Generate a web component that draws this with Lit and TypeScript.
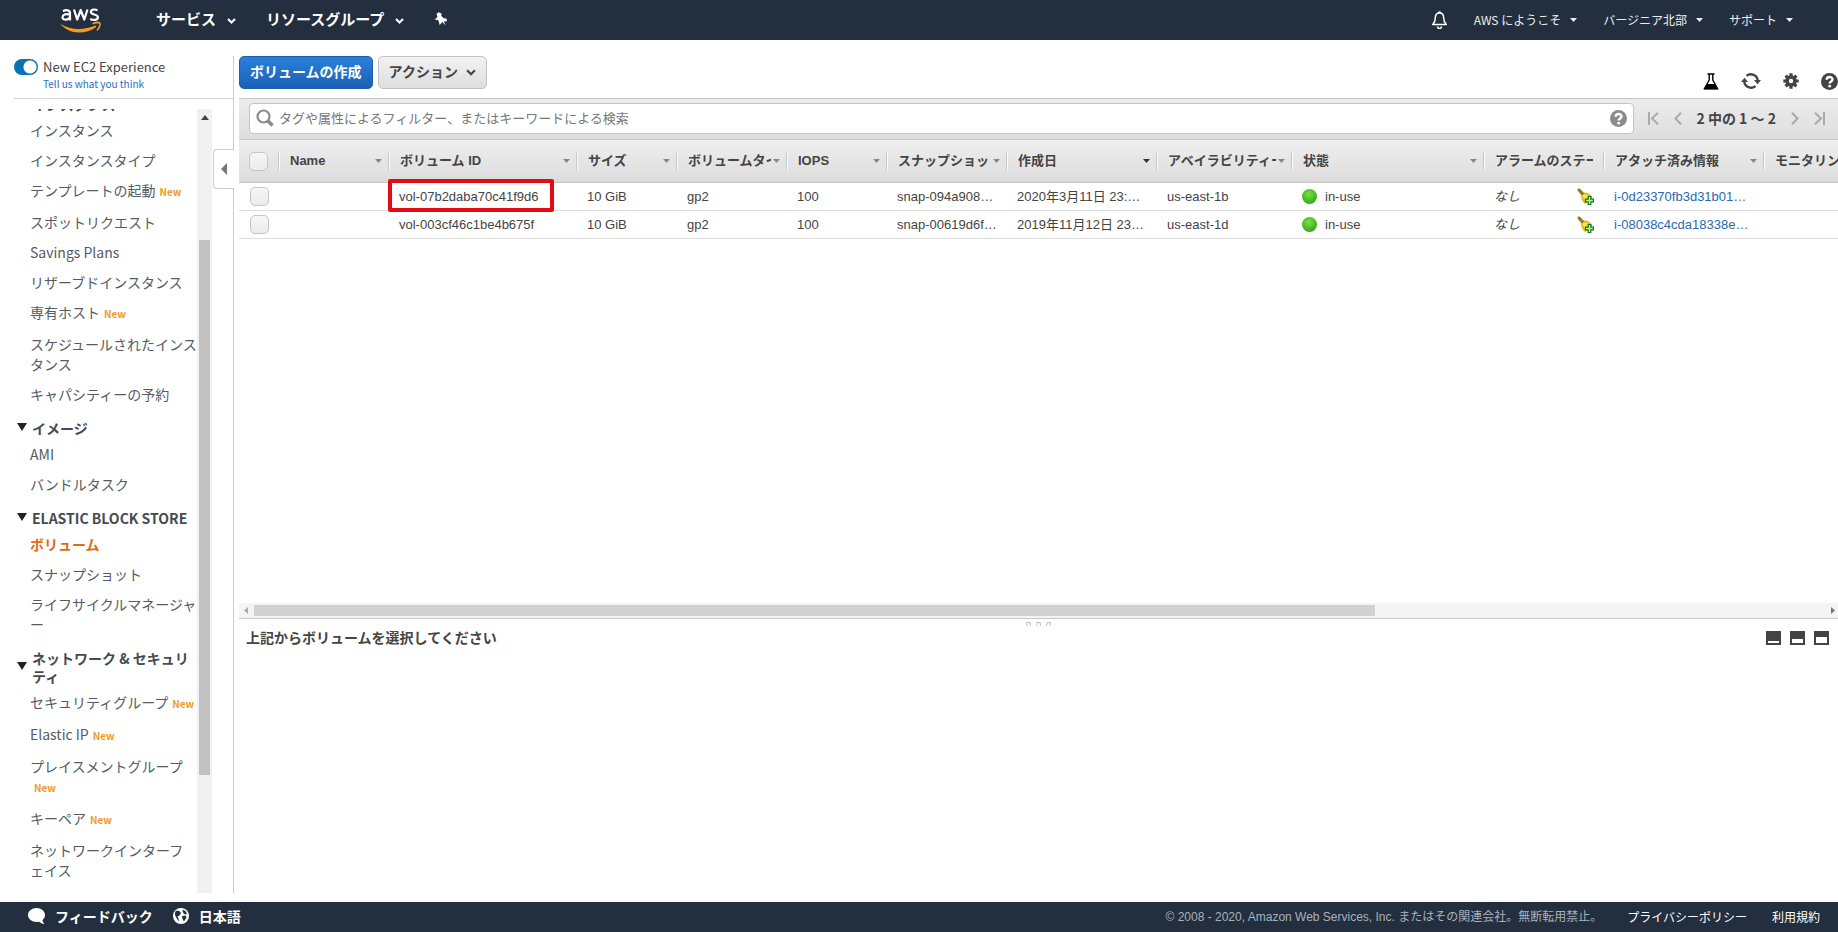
import { LitElement, html, css, svg, nothing } from "lit";
import { customElement } from "lit/decorators.js";
import { classMap } from "lit/directives/class-map.js";

type NavItem = { lines: string[]; heading?: boolean; isNew?: boolean; active?: boolean };

const NAV: NavItem[] = [
  { lines: ["インスタンス"], heading: true },
  { lines: ["インスタンス"] },
  { lines: ["インスタンスタイプ"] },
  { lines: ["テンプレートの起動"], isNew: true },
  { lines: ["スポットリクエスト"] },
  { lines: ["Savings Plans"] },
  { lines: ["リザーブドインスタンス"] },
  { lines: ["専有ホスト"], isNew: true },
  { lines: ["スケジュールされたインス", "タンス"] },
  { lines: ["キャパシティーの予約"] },
  { lines: ["イメージ"], heading: true },
  { lines: ["AMI"] },
  { lines: ["バンドルタスク"] },
  { lines: ["ELASTIC BLOCK STORE"], heading: true },
  { lines: ["ボリューム"], active: true },
  { lines: ["スナップショット"] },
  { lines: ["ライフサイクルマネージャ", "ー"] },
  { lines: ["ネットワーク & セキュリ", "ティ"], heading: true },
  { lines: ["セキュリティグループ"], isNew: true },
  { lines: ["Elastic IP"], isNew: true },
  { lines: ["プレイスメントグループ", ""], isNew: true },
  { lines: ["キーペア"], isNew: true },
  { lines: ["ネットワークインターフ", "ェイス"] },
];

const COLUMNS: { label: string; width: number; caret?: boolean; sorted?: boolean }[] = [
  { label: "Name", width: 110, caret: true },
  { label: "ボリューム ID", width: 188, caret: true },
  { label: "サイズ", width: 100, caret: true },
  { label: "ボリュームタイプ", width: 110, caret: true },
  { label: "IOPS", width: 100, caret: true },
  { label: "スナップショット", width: 120, caret: true },
  { label: "作成日", width: 150, caret: true, sorted: true },
  { label: "アベイラビリティーゾーン", width: 135, caret: true },
  { label: "状態", width: 192, caret: true },
  { label: "アラームのステータス", width: 120 },
  { label: "アタッチ済み情報", width: 160, caret: true },
  { label: "モニタリング", width: 120 },
];

const VOLUMES = [
  { id: "vol-07b2daba70c41f9d6", size: "10 GiB", type: "gp2", iops: "100", snap: "snap-094a908…", date: "2020年3月11日 23:…", zone: "us-east-1b", state: "in-use", instance: "i-0d23370fb3d31b01…", marked: true },
  { id: "vol-003cf46c1be4b675f", size: "10 GiB", type: "gp2", iops: "100", snap: "snap-00619d6f…", date: "2019年11月12日 23…", zone: "us-east-1d", state: "in-use", instance: "i-08038c4cda18338e…", marked: false },
];

const chevron = (w: number, h: number, sw: number) => svg`<svg class="chev" width=${w} height=${h} viewBox="0 0 9 6"><path d="M1 1l3.5 3.5L8 1" fill="none" stroke="currentColor" stroke-width=${sw}/></svg>`;
const triangle = html`<svg width="7" height="4" viewBox="0 0 7 4"><path d="M0 0h7L3.5 4z" fill="currentColor"/></svg>`;
const helpIcon = (size: number) => html`<svg width=${size} height=${size} viewBox="0 0 18 18"><circle cx="9" cy="9" r="9" fill="currentColor"/><path d="M6 7.200c0-4 6.200-3.800 6.200-.4 0 2.200-3 2.100-3 4.200" fill="none" stroke="#fff" stroke-width="2.500"/><circle cx="9.200" cy="13.900" r="1.500" fill="#fff"/></svg>`;

@customElement("app-root")
export class AppRoot extends LitElement {
  static styles = css`
    :host { display: flex; flex-direction: column; height: 100vh; overflow: hidden; background: #fff; color: #444; font: 14px/20px "Noto Sans CJK JP", sans-serif; }
    * { box-sizing: border-box; }
    svg { display: block; flex: none; }
    a { color: inherit; text-decoration: none; }
    button { font: inherit; color: inherit; background: none; border: 0; margin: 0; padding: 0; display: flex; align-items: center; cursor: pointer; white-space: nowrap; }
    .top { flex: none; display: flex; align-items: center; height: 40px; padding: 0 45px 0 59px; background: #232f3e; color: #fff; }
    .top nav { display: flex; align-items: center; margin-left: 53px; padding-bottom: 2px; font-size: 15px; font-weight: 700; gap: 30px; }
    .top nav button { gap: 11px; }
    .chev { margin-top: 3px; }
    .top .account { display: flex; align-items: center; margin-left: auto; font-size: 12px; gap: 26px; color: #eee; }
    .account button { gap: 9px; }
    .body { flex: 1; min-height: 0; display: flex; padding-bottom: 9px; }
    .side { position: relative; flex: none; width: 234px; margin-top: 16px; border-right: 1px solid #ccc; display: flex; flex-direction: column; }
    .switch { display: flex; gap: 5px; margin-left: 14px; height: 43px; border-bottom: 1px solid #d5d5d5; }
    .toggle { appearance: none; margin: 3px 0 0; width: 24px; height: 16px; border-radius: 8px; background: radial-gradient(circle at 16px 8px, #fff 6px, #0972b5 7px); }
    .switch label { display: block; font-size: 13px; line-height: 22px; }
    .switch a { display: block; font-size: 10px; line-height: 12px; color: #2a6ebb; }
    .scroll { flex: 1; min-height: 0; margin-top: 10px; display: flex; overflow: hidden; }
    .list { width: 197px; margin: -24px 0 0; padding: 0; list-style: none; white-space: nowrap; overflow: hidden; color: #545b64; }
    .item { padding: 5px 0 5px 30px; }
    .item.new { padding-bottom: 7px; }
    .item.active { color: #dd6b10; font-weight: 700; }
    .tag { color: #f09a26; font-size: 10px; font-weight: 700; line-height: 16px; margin-left: 4px; }
    .heading { display: flex; align-items: center; gap: 5px; padding: 10px 0 2px 17px; line-height: 18px; font-weight: 700; color: #444b52; }
    .heading svg { margin-bottom: 2px; color: #222; }
    .vbar { width: 15px; background: #f1f1f1; display: flex; flex-direction: column; align-items: center; color: #444; padding-top: 6px; }
    .vthumb { width: 11px; flex: 0 0 535px; margin-top: 120px; background: #c1c1c1; }
    .collapse { position: absolute; right: -1px; top: 93px; width: 21px; height: 40px; background: #fff; border: 1px solid #ccc; border-right: 0; border-radius: 4px 0 0 4px; justify-content: center; color: #777; }
    .main { flex: 1; min-width: 0; margin-left: 5px; display: flex; flex-direction: column; }
    .actions { flex: none; display: flex; gap: 5px; height: 58px; padding-top: 16px; }
    .btn { height: 33px; padding: 0 10px 3px; border: 1px solid #c3c3c3; border-radius: 5px; font-weight: 700; background: linear-gradient(#f2f2f2, #dedede); }
    .btn.menu { gap: 8px; }
    .btn.primary { color: #fff; border-color: #1a5fae; background: linear-gradient(#2a80dc, #1b60b5); }
    .tools { display: flex; align-items: center; gap: 22px; margin: 8px 0 0 auto; height: 34px; color: #444; }
    .filter { flex: none; display: flex; align-items: center; height: 42px; padding: 0 13px 2px 10px; border-top: 1px solid #c4c4c4; border-bottom: 1px solid #c8c8c8; background: linear-gradient(#ececec, #dedede); }
    .search { flex: 1; display: flex; align-items: center; height: 31px; padding: 0 6px; gap: 5px; background: #fff; border: 1px solid #c4c4c4; border-radius: 4px; color: #8b8b8b; }
    .search input { flex: 1; min-width: 0; border: 0; outline: 0; padding: 0; background: none; font: 13px/20px "Noto Sans CJK JP", sans-serif; color: #444; }
    .search input::placeholder { color: #777; opacity: 1; }
    .pager { display: flex; align-items: center; margin-left: 14px; color: #aaa; }
    .pager span { margin: 0 15px; color: #444; font-weight: 700; }
    .pager .gap { margin-left: 15px; }
    .grid { flex: none; height: 463px; overflow: hidden; }
    table { border-collapse: separate; border-spacing: 0; table-layout: fixed; width: 1644px; font: 13px/18px "Liberation Sans", "Noto Sans CJK JP", sans-serif; }
    .pick { width: 39px; }
    th, td { padding: 0; text-align: left; white-space: nowrap; }
    th { height: 43px; background: linear-gradient(#efefef, #dcdcdc); border-bottom: 1px solid #c6c6c6; }
    .cap { display: flex; align-items: center; gap: 2px; height: 18px; padding: 0 6px 0 11px; border-left: 1px solid #c9c9c9; box-shadow: inset 1px 0 #fafafa; color: #888; }
    .cap.plain { padding-right: 10px; }
    .cap span { flex: 1; overflow: hidden; color: #444; }
    .cap.sorted { color: #333; }
    td { height: 28px; padding-left: 11px; border-bottom: 1px solid #ddd; }
    .pick input { appearance: none; display: block; width: 19px; height: 19px; margin: 0; border: 1px solid #c5c5c5; border-radius: 5px; background: linear-gradient(#f6f6f6, #ebebeb); }
    th.pick input { margin-left: 10px; }
    .id { position: relative; }
    .mark { position: absolute; left: 0; top: -4px; width: 166px; height: 33px; border: 4px solid #e60a12; border-radius: 2px; }
    .state, .alarm { display: flex; align-items: center; }
    .state { gap: 8px; }
    .dot { width: 15px; height: 15px; border-radius: 50%; background: radial-gradient(circle at 45% 35%, #7be04a, #3fb51d 60%, #258a10); }
    .alarm { justify-content: space-between; padding-right: 9px; font-style: italic; }
    td a { color: #2a69ad; }
    .hbar { flex: none; display: flex; align-items: center; height: 15px; padding: 0 3px 0 5px; gap: 6px; background: #f4f4f4; color: #777; }
    .hthumb { flex: 0 1 1121px; height: 11px; background: #d1d1d1; }
    .hbar .end { margin-left: auto; }
    .detail { flex: 1; border-top: 1px solid #c8c8c8; }
    .grip { display: flex; justify-content: center; gap: 5px; height: 8px; padding-top: 3px; }
    .grip i { width: 5px; height: 4px; border: 1px solid #bbb; border-bottom: 0; border-radius: 2px; }
    .bar { display: flex; align-items: center; justify-content: space-between; padding: 0 9px 0 7px; }
    h2 { margin: 0; padding-bottom: 2px; font-size: 14px; line-height: 20px; }
    .panes { display: flex; gap: 9px; color: #444; }
    .foot { flex: none; display: flex; align-items: center; height: 30px; padding: 0 18px 0 28px; background: #232f3e; color: #fff; font-weight: 700; }
    .foot button { gap: 10px; margin-right: 20px; padding-bottom: 2px; }
    .legal { margin-left: auto; display: flex; gap: 25px; font-size: 12px; font-weight: 400; }
    .legal span { color: #a9b1ba; font-family: "Liberation Sans", "Noto Sans CJK JP", sans-serif; }
  `;

  private renderNav(item: NavItem) {
    const text = item.lines.map((line, i) => html`${i ? html`<br>` : nothing}${line}`);
    if (item.heading) {
      return html`<li class="heading"><svg width="10" height="8" viewBox="0 0 10 8"><path d="M0 0h10L5 8z" fill="currentColor"/></svg><span>${text}</span></li>`;
    }
    return html`<li class=${classMap({ item: true, new: !!item.isNew, active: !!item.active })}><a href="#">${text}</a>${item.isNew ? html`<span class="tag">New</span>` : nothing}</li>`;
  }

  private renderBell() {
    return html`<svg width="17" height="17" viewBox="0 0 17 17"><path d="M4.500 5C9 3.500 13 5 15.500 9.500L8 16C4.500 13 3.500 9 4.500 5z" fill="#e8b818"/><path d="M5.500 6.500c2.500-.8 5 0 7 2.500L8.500 12.500C6.500 11 5.500 9 5.500 6.500z" fill="#fbe152"/><path d="M.5.500L3 .800 7.500 5.500 4.800 7.500.800 3z" fill="#8f7a2a"/><path d="M11.200 8.500h2.600v2.700h2.700v2.600h-2.700v2.700h-2.600v-2.700H8.500v-2.600h2.700z" fill="#b5f79b" stroke="#0f7a10" stroke-width="1.200"/></svg>`;
  }

  render() {
    return html`
      <header class="top">
        <a href="#" aria-label="AWS"><svg width="44" height="27" viewBox="0 0 44 27">
          <g fill="none" stroke="#fff" stroke-width="2.200" stroke-linejoin="round">
            <path d="M4 4.200c3-1.700 7-1.300 7 2V13.500M11 7.600C6.500 6.500 3.500 7.500 3.500 10.200c0 3.500 6.200 3 7.500-.4"/>
            <path d="M15 2.500l3.200 10L21.700 3l3.600 9.500 3.200-10"/>
            <path d="M38.500 3.200c-3-1.300-6.600-.7-6.600 1.800 0 3.200 7 1.800 7 5.200 0 3-4.400 3.400-7.800 1.700"/>
          </g>
          <path d="M1 16.800c6 3.200 11 5 17 5.200s13-.8 18.500-3.400l.8 1.400C32 24 26 25.600 20 25.600 12.500 25.400 6 22.600 1 16.800z" fill="#f7981f"/>
          <path d="M33.500 16.800c3-1.300 6.500-1.500 7.300-.6.700 1.100-.3 4.800-2.800 7.300" fill="none" stroke="#f7981f" stroke-width="1.600"/>
        </svg></a>
        <nav>
          <button>サービス ${chevron(9, 6, 2)}</button>
          <button>リソースグループ ${chevron(9, 6, 2)}</button>
          <button aria-label="ピン"><svg width="14" height="14" viewBox="0 0 14 14"><path d="M4.500.3l3 1.200-.2 2.500 2.800 2.600 2.200-.3.700 3-3.200.2 2 4-3.400-3.400-2.800 2.800-.7-3L4 8 .500 7.500l3-2.500L2.500 2z" fill="#fff"/></svg></button>
        </nav>
        <div class="account">
          <button aria-label="通知"><svg width="17" height="18" viewBox="0 0 17 18"><path d="M8.500 2C5.500 2 4.300 4.300 4.300 7c0 3.500-1 5-2.600 6.500h13.600C13.700 12 12.700 10.500 12.700 7c0-2.700-1.200-5-4.200-5z" fill="none" stroke="#fff" stroke-width="1.500" stroke-linejoin="round"/><path d="M7.500 2a1 1 0 0 1 2 0M6.500 15.500a2 2 0 0 0 4 0" stroke="#fff" stroke-width="1.500" fill="none"/></svg></button>
          <button>AWS にようこそ ${triangle}</button>
          <button>バージニア北部 ${triangle}</button>
          <button>サポート ${triangle}</button>
        </div>
      </header>
      <div class="body">
        <aside class="side">
          <div class="switch">
            <input class="toggle" id="exp" type="checkbox" role="switch" checked>
            <div><label for="exp">New EC2 Experience</label><a href="#">Tell us what you think</a></div>
          </div>
          <div class="scroll">
            <ul class="list">${NAV.map((n) => this.renderNav(n))}</ul>
            <div class="vbar"><svg width="8" height="5" viewBox="0 0 8 5"><path d="M0 5h8L4 0z" fill="currentColor"/></svg><div class="vthumb"></div></div>
          </div>
          <button class="collapse" aria-label="閉じる"><svg width="6" height="12" viewBox="0 0 6 12"><path d="M6 0v12L0 6z" fill="currentColor"/></svg></button>
        </aside>
        <main class="main">
          <div class="actions">
            <button class="btn primary">ボリュームの作成</button>
            <button class="btn menu">アクション ${chevron(10, 7, 2)}</button>
            <div class="tools">
              <button aria-label="実験"><svg width="16" height="17" viewBox="0 0 16 17"><path d="M4.500 1h7M6.200 1v6L1.500 15.500h13L9.800 7V1" fill="none" stroke="#000" stroke-width="1.400"/><path d="M4 11h8l3 5.500H1z"/></svg></button>
              <button aria-label="更新"><svg width="20" height="18" viewBox="0 0 20 18"><path d="M5.500 3.800A7 7 0 0 1 16.800 8.500M14.500 14.200A7 7 0 0 1 3.200 9.500" fill="none" stroke="currentColor" stroke-width="2.300"/><path d="M13 8h7l-3.500 4.200zM0 10h7L3.500 5.800z" fill="currentColor"/></svg></button>
              <button aria-label="設定"><svg width="16" height="16" viewBox="0 0 16 16"><circle cx="8" cy="8" r="4" fill="none" stroke="currentColor" stroke-width="3.600"/><path d="M8 .300v3.500M8 12.200v3.500M.300 8h3.500M12.200 8h3.500M2.600 2.600L5 5M11 11l2.400 2.400M13.400 2.600L11 5M5 11l-2.400 2.400" stroke="currentColor" stroke-width="3.200"/></svg></button>
              <button aria-label="ヘルプ">${helpIcon(17)}</button>
            </div>
          </div>
          <div class="filter">
            <div class="search">
              <svg width="18" height="18" viewBox="0 0 18 18"><circle cx="7.500" cy="7.500" r="6" fill="none" stroke="currentColor" stroke-width="2.200"/><path d="M12 12l4.500 4.500" stroke="currentColor" stroke-width="3.500"/></svg>
              <input type="text" aria-label="検索" placeholder="タグや属性によるフィルター、またはキーワードによる検索">
              ${helpIcon(17)}
            </div>
            <div class="pager">
              <button aria-label="最初"><svg width="11" height="13" viewBox="0 0 11 13"><path d="M1 0v13M10 .800L4 6.500l6 5.700" fill="none" stroke="currentColor" stroke-width="2"/></svg></button>
              <button class="gap" aria-label="前へ"><svg width="8" height="13" viewBox="0 0 8 13"><path d="M7 .800L1.500 6.500 7 12.200" fill="none" stroke="currentColor" stroke-width="2"/></svg></button>
              <span>2 中の 1 ～ 2</span>
              <button aria-label="次へ"><svg width="8" height="13" viewBox="0 0 8 13"><path d="M1 .800l5.500 5.700L1 12.200" fill="none" stroke="currentColor" stroke-width="2"/></svg></button>
              <button class="gap" aria-label="最後"><svg width="11" height="13" viewBox="0 0 11 13"><path d="M10 0v13M1 .800l6 5.700-6 5.700" fill="none" stroke="currentColor" stroke-width="2"/></svg></button>
            </div>
          </div>
          <div class="grid">
            <table>
              <thead><tr>
                <th class="pick"><input type="checkbox" aria-label="すべて選択"></th>
                ${COLUMNS.map((c) => html`<th style="width:${c.width}px"><div class=${classMap({ cap: true, sorted: !!c.sorted, plain: !c.caret })}><span>${c.label}</span>${c.caret ? triangle : nothing}</div></th>`)}
              </tr></thead>
              <tbody>${VOLUMES.map((v) => html`<tr>
                <td class="pick"><input type="checkbox" aria-label=${v.id}></td>
                <td></td>
                <td class="id">${v.id}${v.marked ? html`<div class="mark"></div>` : nothing}</td>
                <td>${v.size}</td><td>${v.type}</td><td>${v.iops}</td><td>${v.snap}</td><td>${v.date}</td><td>${v.zone}</td>
                <td><div class="state"><i class="dot"></i>${v.state}</div></td>
                <td><div class="alarm">なし${this.renderBell()}</div></td>
                <td><a href="#">${v.instance}</a></td><td></td>
              </tr>`)}</tbody>
            </table>
          </div>
          <div class="hbar"><svg width="4" height="7" viewBox="0 0 4 7"><path d="M4 0v7L0 3.500z" fill="#aaa"/></svg><div class="hthumb"></div><svg class="end" width="4" height="7" viewBox="0 0 4 7"><path d="M0 0v7l4-3.500z" fill="currentColor"/></svg></div>
          <section class="detail">
            <div class="grip"><i></i><i></i><i></i></div>
            <div class="bar">
              <h2>上記からボリュームを選択してください</h2>
              <div class="panes">${[10, 8, 6].map((y) => html`<button aria-label="パネル"><svg width="15" height="14" viewBox="0 0 15 14"><path d="M0 0h15v14H0z" fill="currentColor"/><path d=${`M2 ${y}h11V12H2z`} fill="#fff"/></svg></button>`)}</div>
            </div>
          </section>
        </main>
      </div>
      <footer class="foot">
        <button><svg width="17" height="16" viewBox="0 0 17 16"><path d="M8.500 0C13 0 17 2.900 17 7c0 2-1 3.800-2.500 5 .2 1.600.8 2.800 2 4-2.300-.2-4-.9-5.500-2.200-6 .9-11-2.300-11-6.800C0 2.900 4 0 8.500 0z" fill="#fff"/></svg>フィードバック</button>
        <button><svg width="16" height="16" viewBox="0 0 16 16"><circle cx="8" cy="8" r="8" fill="#fff"/><path d="M2.200 3.500l2.300-1 2.500 1 1 1.500-1.500 2.500-2 1 1 2 .500 3-2-2.500-2-4zM9.500 1.500l3 1.500 1.500 3-2 .5-2-2zM9 8l3.500-.5 1 2-2.500 4-1.500-2.500z" fill="#232f3e"/></svg>日本語</button>
        <div class="legal"><span>© 2008 - 2020, Amazon Web Services, Inc. またはその関連会社。無断転用禁止。</span><a href="#">プライバシーポリシー</a><a href="#">利用規約</a></div>
      </footer>`;
  }
}
